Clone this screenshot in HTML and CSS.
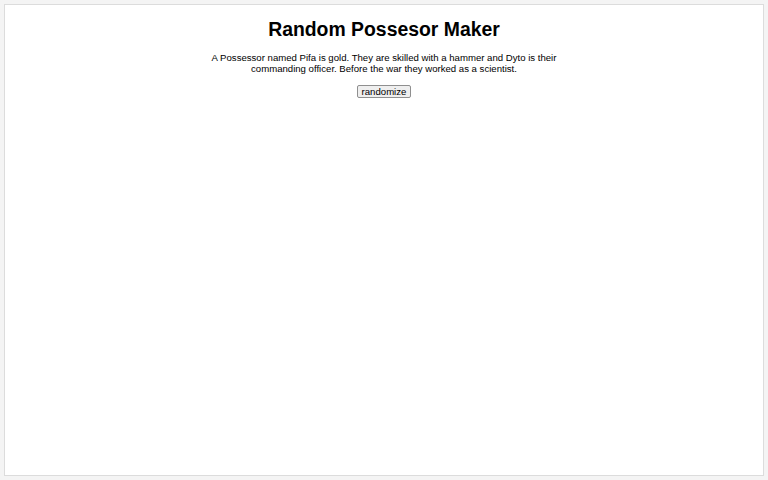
FILE: index.html
```html
<!DOCTYPE html>
<html>
<head>
<meta charset="utf-8">
<link rel="stylesheet" href="styles.css">
</head>
<body>
<div class="panel">
  <h1 class="title">Random Possesor Maker</h1>
  <p class="story">A Possessor named Pifa is gold. They are skilled with a hammer and Dyto is their commanding officer. Before the war they worked as a scientist.</p>
  <button class="btn">randomize</button>
</div>
</body>
</html>
```
FILE: styles.css
```css
html, body {
  margin: 0;
  padding: 0;
}
body {
  background: #f4f4f4;
  padding: 4px;
  font-family: "Liberation Sans", Arial, sans-serif;
  color: #000;
}
.panel {
  background: #fff;
  border: 1px solid #dcdcdc;
  height: 472px;
  box-sizing: border-box;
  display: flex;
  flex-direction: column;
  align-items: center;
  padding-top: 12px;
}
.title {
  margin: 0;
  font-size: 19.4px;
  font-weight: bold;
  line-height: 24px;
}
.story {
  margin: 11px 0 0 0;
  width: 350px;
  font-size: 9.6px;
  line-height: 11px;
  text-align: center;
}
.btn {
  margin-top: 11px;
  font-family: "Liberation Sans", Arial, sans-serif;
  font-size: 9.6px;
  line-height: 11px;
  padding: 0 4px;
  border: 1px solid #8f8f8f;
  border-radius: 2px;
  background: #efefef;
  color: #000;
}
```
